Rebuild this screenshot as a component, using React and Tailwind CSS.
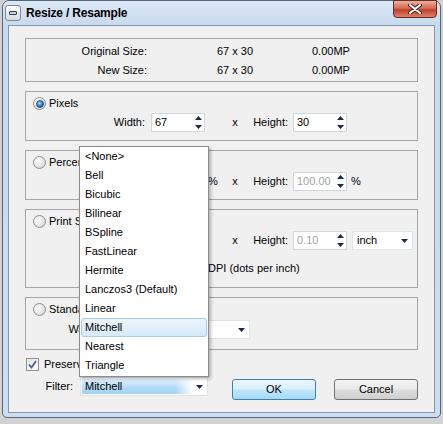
import React from 'react';

const filters = [
    '<None>', 'Bell', 'Bicubic', 'Bilinear', 'BSpline', 'FastLinear',
    'Hermite', 'Lanczos3 (Default)', 'Linear', 'Mitchell', 'Nearest', 'Triangle',
];

const DownArrow = () => (
    <svg width="7" height="4" viewBox="0 0 7 4">
        <polygon points="0,0 7,0 3.5,4" fill="#1b2a4e" />
    </svg>
);

const Spin = ({ value, disabled }) => (
    <div
        className={`flex items-center justify-between w-[54px] h-[19px] border border-[#cfd7e0] bg-white pl-[3px] pr-[2px] ${
            disabled ? 'text-[#a3a3a3]' : 'text-black'
        }`}
    >
        <span>{value}</span>
        <svg width="7" height="13" viewBox="0 0 7 13">
            <polygon points="3.5,0 7,4 0,4" fill="#1b2a4e" />
            <polygon points="0,9 7,9 3.5,13" fill="#1b2a4e" />
        </svg>
    </div>
);

const Combo = ({ value, className }) => (
    <div className={`flex items-center justify-between h-[19px] border border-[#dde4ec] bg-white pl-[4px] pr-[4px] ${className}`}>
        <span>{value}</span>
        <DownArrow />
    </div>
);

const Radio = ({ checked }) => (
    <span className="flex items-center justify-center w-[13px] h-[13px] rounded-full border border-[#8e8f8f] bg-[radial-gradient(circle_at_35%_35%,#ffffff,#cfcfcf)]">
        {checked && (
            <span className="w-[8px] h-[8px] rounded-full border border-[#1c4f80] bg-[radial-gradient(circle_at_40%_35%,#b5e2fb,#2b7cc0_55%,#0f4579)]" />
        )}
    </span>
);

const RadioRow = ({ checked, label }) => (
    <div className="flex items-center h-[13px] pl-[7px] gap-[3px]">
        <Radio checked={checked} />
        <span>{label}</span>
    </div>
);

const Label = ({ children, w = 'w-[119px]' }) => (
    <span className={`${w} text-right shrink-0`}>{children}</span>
);

const DimRow = ({ w, h, unit, tail, disabled }) => (
    <div className="flex items-center h-[19px] mt-[3px]">
        <Label>Width:</Label>
        <div className="ml-[6px]">
            <Spin value={w} disabled={disabled} />
        </div>
        <span className="w-[24px] pl-[3px]">{unit}</span>
        <span className="w-[12px] text-center">x</span>
        <Label w="w-[47px]">Height:</Label>
        <div className="ml-[5px]">
            <Spin value={h} disabled={disabled} />
        </div>
        {tail}
    </div>
);

const App = () => {
    return (
        <div className="relative w-[443px] h-[424px] bg-[#d2d2d2] pl-[2px] overflow-hidden font-['Liberation_Sans',Arial,sans-serif] text-[11px] text-black leading-none">
            <div className="w-[439px] h-[418px] flex flex-col border border-[#56667a] rounded-t-[7px] rounded-b-[5px] bg-[linear-gradient(to_bottom,#dce8f5,#c8daee_24px,#cddef1)]">
                {/* title bar */}
                <div className="h-[24px] shrink-0 flex items-start justify-between">
                    <div className="flex items-center h-[24px] pl-[2px] gap-[5px]">
                        <div className="flex items-center justify-center w-[16px] h-[16px] rounded-[3px] border border-[#7b8795] bg-gradient-to-b from-white to-[#d3dae3]">
                            <div className="w-[8px] h-[4px] rounded-[1px] border border-[#34414f] bg-[#c6d0dc]" />
                        </div>
                        <span className="font-bold text-[12px] tracking-[-0.2px]">Resize / Resample</span>
                    </div>
                    <div className="-mt-[1px] mr-[3px] w-[44px] h-[18px] flex items-center justify-center rounded-b-[4px] border border-[#6a2a20] bg-[linear-gradient(to_bottom,#eab0a2,#d46a52_45%,#c2402a_55%,#d9826a)]">
                        <svg width="14" height="10" viewBox="0 0 14 10">
                            <path d="M2 1 L12 9 M12 1 L2 9" stroke="#4a2520" strokeWidth="4" strokeLinecap="round" />
                            <path d="M2 1 L12 9 M12 1 L2 9" stroke="#ffffff" strokeWidth="2" strokeLinecap="round" />
                        </svg>
                    </div>
                </div>

                {/* client */}
                <div className="mx-[5px] mb-[4px] flex-1 flex flex-col border border-[#8496ab] bg-[#f0f0f0] px-[16px] pt-[12px]">
                    <div className="h-[44px] border border-[#a6a6a6] pt-[3px]">
                        {['Original Size:', 'New Size:'].map((label) => (
                            <div key={label} className="flex items-center h-[19px]">
                                <span className="w-[121px] text-right">{label}</span>
                                <span className="ml-[70px] w-[95px]">67 x 30</span>
                                <span>0.00MP</span>
                            </div>
                        ))}
                    </div>

                    <div className="h-[50px] mt-[9px] border border-[#a6a6a6] pt-[5px]">
                        <RadioRow checked label="Pixels" />
                        <DimRow w="67" h="30" />
                    </div>

                    <div className="h-[50px] mt-[9px] border border-[#a6a6a6] pt-[5px]">
                        <RadioRow label="Percentage" />
                        <DimRow
                            w="100.00"
                            h="100.00"
                            unit="%"
                            disabled
                            tail={<span className="ml-[4px]">%</span>}
                        />
                    </div>

                    <div className="h-[79px] mt-[9px] border border-[#a6a6a6] pt-[5px]">
                        <RadioRow label="Print Size" />
                        <DimRow
                            w="0.22"
                            h="0.10"
                            disabled
                            tail={<Combo value="inch" className="ml-[5px] w-[61px]" />}
                        />
                        <div className="flex items-center h-[19px] mt-[9px]">
                            <Label>Resolution:</Label>
                            <div className="ml-[6px]">
                                <Spin value="300" disabled />
                            </div>
                            <span className="pl-[3px]">DPI (dots per inch)</span>
                        </div>
                    </div>

                    <div className="h-[53px] mt-[9px] border border-[#a6a6a6] pt-[5px]">
                        <RadioRow label="Standard Sizes" />
                        <div className="flex items-center h-[19px] mt-[4px]">
                            <Label>Wallpaper Size:</Label>
                            <Combo value="" className="ml-[6px] w-[99px]" />
                        </div>
                    </div>

                    <div className="flex items-center h-[13px] mt-[8px] pl-[1px] gap-[5px]">
                        <span className="flex items-center justify-center w-[13px] h-[13px] border border-[#8e8f8f] bg-gradient-to-br from-[#e4e4e4] to-white">
                            <svg width="9" height="9" viewBox="0 0 9 9">
                                <path d="M1 4.5 L3.5 7.5 L8 1" fill="none" stroke="#4a5f96" strokeWidth="1.8" />
                            </svg>
                        </span>
                        <span>Preserve aspect ratio</span>
                    </div>

                    <div className="flex items-start mt-[6px]">
                        <span className="w-[48px] h-[19px] flex items-center justify-end">Filter:</span>
                        <div className="ml-[7px] w-[128px] h-[19px] flex items-stretch border border-[#dde4ec] bg-white p-[1px]">
                            <div className="flex-1 flex items-center bg-[linear-gradient(to_bottom,#e4f1fc,#b2daf6_60%,#a3d1f3)]">
                                <span className="flex-1 pl-[3px]">Mitchell</span>
                                <div className="w-[18px] self-stretch bg-gradient-to-r from-transparent to-white" />
                            </div>
                            <div className="w-[13px] flex items-center justify-center">
                                <DownArrow />
                            </div>
                        </div>
                        <button className="ml-[24px] mt-[2px] w-[84px] h-[21px] rounded-[3px] border border-[#3c7fb1] bg-[linear-gradient(to_bottom,#eaf6fd,#d9f0fc_45%,#bee6fd_55%,#a7d9f5)]">
                            OK
                        </button>
                        <button className="ml-[18px] mt-[2px] w-[84px] h-[21px] rounded-[3px] border border-[#707070] bg-[linear-gradient(to_bottom,#f2f2f2,#ebebeb_45%,#dddddd_55%,#cfcfcf)]">
                            Cancel
                        </button>
                    </div>
                </div>
            </div>

            {/* open filter list */}
            <div className="absolute left-[79px] top-[146px] w-[130px] h-[231px] border border-[#8c8c8c] bg-white shadow-[2px_2px_3px_rgba(0,0,0,0.25)] flex flex-col">
                {filters.map((f) =>
                    f === 'Mitchell' ? (
                        <div
                            key={f}
                            className="mx-[1px] h-[19px] flex items-center pl-[3px] rounded-[3px] border border-[#a5cbee] bg-gradient-to-b from-[#eef6fd] to-[#d6eafa]"
                        >
                            {f}
                        </div>
                    ) : (
                        <div key={f} className="h-[19px] flex items-center pl-[5px]">
                            {f}
                        </div>
                    )
                )}
            </div>
        </div>
    );
};

export default App;
